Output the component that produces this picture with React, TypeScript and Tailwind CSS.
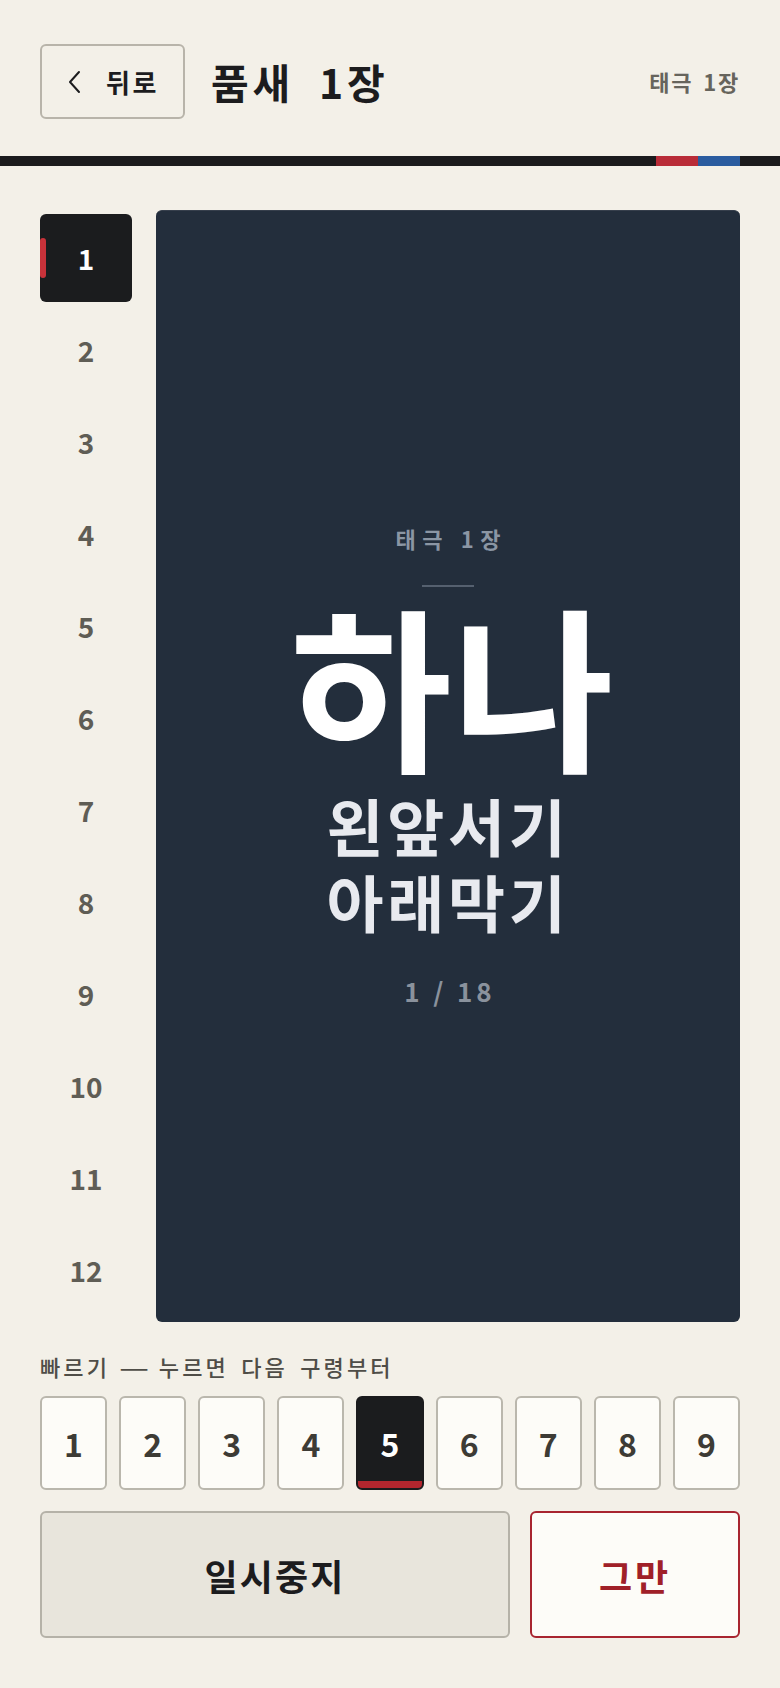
import React from "react";

const steps = [1, 2, 3, 4, 5, 6, 7, 8, 9, 10, 11, 12];
const quick = [1, 2, 3, 4, 5, 6, 7, 8, 9];

export default function App() {
  const current = 1;
  const quickActive = 5;

  return (
    <div
      className="min-h-[1688px] bg-[#f3f0e8] text-[#1c1c1e]"
      style={{ fontFamily: '"Noto Sans CJK KR", "Noto Sans", sans-serif' }}
    >
      {/* header */}
      <header className="flex items-center px-10 pt-[44px] pb-[37px]">
        <button className="flex h-[75px] w-[145px] items-center justify-center gap-[24px] rounded-md border-2 border-[#b8b4aa] text-[26px] font-bold tracking-[0.1em]">
          <svg width="16" height="24" viewBox="0 0 16 24" fill="none">
            <path d="M13 2 L4 12 L13 22" stroke="#1c1c1e" strokeWidth="2" strokeLinecap="round" strokeLinejoin="round" />
          </svg>
          <span>뒤로</span>
        </button>
        <h1 className="ml-[26px] text-[41px] font-bold tracking-[0.09em] [word-spacing:0.3em]">품새 1장</h1>
        <span className="ml-auto text-[22px] font-bold tracking-[0.08em] [word-spacing:0.15em] text-[#66645c]">태극 1장</span>
      </header>

      <div className="flex h-[10px] bg-[#1b1b1d] pr-10">
        <div className="flex-1" />
        <div className="w-[42px] bg-[#b92c38]" />
        <div className="w-[42px] bg-[#2a5c9f]" />
      </div>

      {/* body */}
      <main className="mt-[44px] flex gap-6 px-10">
        <nav className="flex w-[92px] flex-col gap-1 pt-1">
          {steps.map((n) => (
            <div
              key={n}
              className={
                n === current
                  ? "relative flex h-[88px] items-center justify-center rounded-md bg-[#1b1c1e] text-[28px] font-bold text-white"
                  : "flex h-[88px] items-center justify-center text-[28px] font-bold text-[#5f5d55]"
              }
            >
              {n === current && (
                <span className="absolute left-0 top-1/2 h-10 w-[6px] -translate-y-1/2 rounded-sm bg-[#c8323a]" />
              )}
              {n}
            </div>
          ))}
        </nav>

        <section className="flex h-[1112px] flex-1 flex-col items-center justify-center rounded-md border-t border-[#363f4c] bg-[#232e3c] text-center">
          <p className="pl-[0.3em] text-[22px] font-bold leading-[29px] tracking-[0.3em] text-[#8b96a4]">태극 1장</p>
          <div className="mt-8 h-[2px] w-[52px] bg-[#55606f]" />
          <p className="mt-2 pl-[8px] text-[176px] font-semibold leading-none text-white">하나</p>
          <div className="mt-4 text-[62px] font-bold leading-[76px] tracking-[0.06em] text-[#e8eaef]">
            <p>왼앞서기</p>
            <p>아래막기</p>
          </div>
          <p className="mt-8 pl-[0.15em] text-[26px] font-bold tracking-[0.15em] text-[#8a929d]">1 / 18</p>
        </section>
      </main>

      {/* quick jump */}
      <div className="px-10 pt-[28px]">
        <p className="text-[22px] font-medium leading-[32px] tracking-[0.14em] [word-spacing:0.2em] text-[#4f4d47]">
          빠르기 <span className="inline-block w-[24px] scale-x-[1.5] text-center tracking-normal">—</span> 누르면 다음 구령부터
        </p>
        <div className="mt-[14px] grid grid-cols-9 gap-3">
          {quick.map((n) => (
            <button
              key={n}
              className={
                n === quickActive
                  ? "relative flex h-[94px] items-center justify-center overflow-hidden rounded-md border-2 border-[#1b1b1d] bg-[#1b1c1e] text-[32px] font-bold text-white"
                  : "flex h-[94px] items-center justify-center rounded-md border-2 border-[#bab7ad] bg-[#fdfcf8] text-[32px] font-bold text-[#3d3b35]"
              }
            >
              {n}
              {n === quickActive && (
                <span className="absolute bottom-0 left-0 right-0 h-[7px] bg-[#b3262e]" />
              )}
            </button>
          ))}
        </div>

        <div className="mt-[21px] flex gap-5">
          <button className="flex h-[127px] flex-1 items-center justify-center rounded-md border-2 border-[#b5b2a8] bg-[#e8e5dc] text-[36px] font-bold tracking-[0.06em]">
            일시중지
          </button>
          <button className="flex h-[127px] w-[210px] items-center justify-center rounded-md border-2 border-[#a82530] bg-[#fdfcf8] text-[36px] font-bold tracking-[0.08em] text-[#a02028]">
            그만
          </button>
        </div>
      </div>
    </div>
  );
}
